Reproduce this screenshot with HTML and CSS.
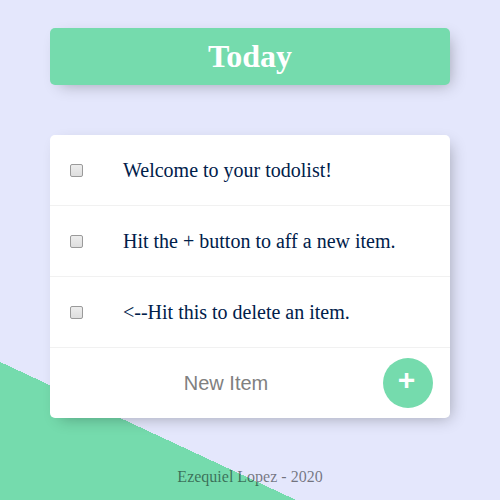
FILE: index.html
```html
<!DOCTYPE html>
<html lang="en">
<head>
<meta charset="utf-8">
<title>To-Do List</title>
<link rel="stylesheet" href="styles.css">
</head>
<body>
  <main class="page">
    <div class="box heading">
      <h1 class="title">Today</h1>
    </div>
    <div class="box list">
      <div class="item">
        <input class="check" type="checkbox">
        <p class="item-text">Welcome to your todolist!</p>
      </div>
      <div class="item">
        <input class="check" type="checkbox">
        <p class="item-text">Hit the + button to aff a new item.</p>
      </div>
      <div class="item">
        <input class="check" type="checkbox">
        <p class="item-text">&lt;--Hit this to delete an item.</p>
      </div>
      <form class="item new-form">
        <input class="new-input" type="text" name="newItem" placeholder="New Item" autocomplete="off">
        <button class="add-btn" type="submit">+</button>
      </form>
    </div>
    <footer class="footer">Ezequiel Lopez - 2020</footer>
  </main>
</body>
</html>
```
FILE: styles.css
```css
html {
  background-color: #E4E7FC;
  background-image: linear-gradient(25deg, #75DBAD 50%, #E4E7FC 50%);
  background-size: 100% 957px;
  background-repeat: no-repeat;
  font-family: "Liberation Serif", "Times New Roman", serif;
}

body {
  margin: 0;
}

.page {
  width: 400px;
  margin: 0 auto;
  padding-top: 28px;
}

.box {
  background: #fff;
  border-radius: 5px;
  box-shadow: 5px 5px 15px -5px rgba(0, 0, 0, 0.3);
}

.heading {
  background-color: #75DBAD;
  text-align: center;
}

.title {
  margin: 0;
  padding: 10px;
  color: #fff;
  font-size: 32px;
  font-weight: bold;
  line-height: 37px;
}

.list {
  margin-top: 50px;
}

.item {
  min-height: 70px;
  display: flex;
  align-items: center;
  border-bottom: 1px solid #F1F1F1;
}

.item:last-child {
  border-bottom: 0;
}

.check {
  -webkit-appearance: none;
  appearance: none;
  box-sizing: border-box;
  margin: 20px;
  width: 13px;
  height: 13px;
  border: 1px solid #9a9a9a;
  border-radius: 2px;
  background: linear-gradient(#ededed, #dedede);
  flex-shrink: 0;
}

.check:checked {
  background: #75DBAD;
  border-color: #5cc496;
}

.item-text {
  margin: 0;
  padding: 20px;
  font-size: 20px;
  color: #00204a;
}

.new-form {
  margin: 0 0 0 20px;
}

.new-input {
  box-sizing: border-box;
  width: 312px;
  height: 60px;
  padding: 0;
  border: none;
  text-align: center;
  font-family: "Liberation Sans", Arial, sans-serif;
  font-size: 20px;
  color: #333;
  background: transparent;
}

.new-input::placeholder {
  color: grey;
  opacity: 1;
}

.new-input:focus {
  outline: none;
}

.add-btn {
  margin-left: 1px;
  width: 50px;
  height: 50px;
  border: 0;
  border-radius: 50%;
  background-color: #75DBAD;
  color: #fff;
  font-family: "Liberation Sans", Arial, sans-serif;
  font-size: 30px;
  font-weight: bold;
  line-height: 1;
  padding: 0 3px 6px 0;
  cursor: pointer;
}

.footer {
  margin-top: 50px;
  text-align: center;
  font-size: 16px;
  color: rgba(0, 0, 0, 0.5);
}
```
